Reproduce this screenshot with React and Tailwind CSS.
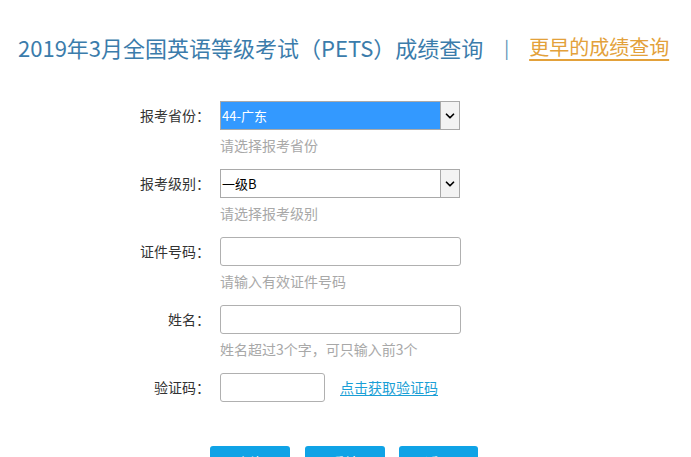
import { ChevronDown } from 'lucide-react';

const font = { fontFamily: '"Noto Sans CJK SC", "Noto Sans", sans-serif' };

function Arrow() {
  return (
    <span className="flex h-full w-[19px] items-center justify-center border-l border-[#a9a9a9] bg-[#f3f3f3]">
      <ChevronDown className="h-[14px] w-[14px] text-black" strokeWidth={3} />
    </span>
  );
}

function Row({ label, hint, children }) {
  return (
    <div className="mb-[14px] flex">
      <div className="flex h-[29px] w-[210px] shrink-0 items-center justify-end text-[14px] text-[#333]">
        {label}
      </div>
      <div className="ml-[10px]">
        {children}
        {hint && <div className="mt-[5px] text-[14px] leading-[20px] text-[#a8a8a8]">{hint}</div>}
      </div>
    </div>
  );
}

export default function App() {
  return (
    <div className="min-h-screen bg-white" style={font}>
      <div className="flex items-center pl-[18px] pt-[31px] leading-[32px]">
        <h1 className="text-[22px] text-[#3b7cab]">2019年3月全国英语等级考试（PETS）成绩查询</h1>
        <span className="ml-[21px] text-[18px] text-[#5a8fb5]">|</span>
        <a href="#" className="ml-[20px] text-[20px] text-[#e3a13a] underline underline-offset-[4px]">
          更早的成绩查询
        </a>
      </div>

      <div className="mt-[38px]">
        <Row label="报考省份：" hint="请选择报考省份">
          <div className="flex h-[29px] w-[240px] items-stretch border border-[#a9a9a9]">
            <div className="flex flex-1 items-center bg-[#3399ff] pl-[1px] text-[13px] text-white">44-广东</div>
            <Arrow />
          </div>
        </Row>
        <Row label="报考级别：" hint="请选择报考级别">
          <div className="flex h-[29px] w-[240px] items-stretch border border-[#a9a9a9]">
            <div className="flex flex-1 items-center pl-[1px] text-[13px] text-black">一级B</div>
            <Arrow />
          </div>
        </Row>
        <Row label="证件号码：" hint="请输入有效证件号码">
          <input className="h-[29px] w-[241px] rounded-[3px] border border-[#b0b0b0] px-2 text-[13px] outline-none" />
        </Row>
        <Row label="姓名：" hint="姓名超过3个字，可只输入前3个">
          <input className="h-[29px] w-[241px] rounded-[3px] border border-[#b0b0b0] px-2 text-[13px] outline-none" />
        </Row>
        <div className="flex">
          <div className="flex h-[29px] w-[210px] shrink-0 items-center justify-end text-[14px] text-[#333]">
            验证码：
          </div>
          <input className="ml-[10px] h-[29px] w-[105px] rounded-[3px] border border-[#b0b0b0] px-2 text-[13px] outline-none" />
          <a href="#" className="ml-[15px] flex h-[29px] items-center text-[14px] text-[#1b9fd6] underline underline-offset-2">
            点击获取验证码
          </a>
        </div>
        <div className="mt-[44px] flex pl-[210px]">
          <button className="h-[32px] w-[80px] rounded-[3px] bg-[#0fa3e6] text-[14px] text-white">查询</button>
          <button className="ml-[15px] h-[32px] w-[80px] rounded-[3px] bg-[#0fa3e6] text-[14px] text-white">重填</button>
          <button className="ml-[14px] h-[32px] w-[79px] rounded-[3px] bg-[#0fa3e6] text-[14px] text-white">返回</button>
        </div>
      </div>
    </div>
  );
}
